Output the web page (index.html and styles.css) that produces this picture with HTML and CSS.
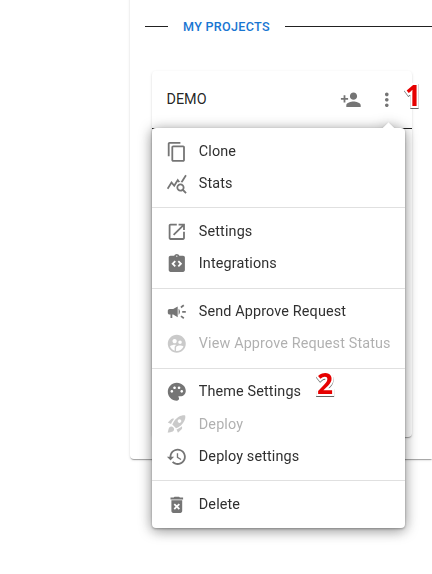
FILE: index.html
```html
<!DOCTYPE html>
<html lang="en">
<head>
<meta charset="utf-8">
<title>My projects</title>
<link rel="stylesheet" href="styles.css">
</head>
<body>
<main class="panel">
  <h2 class="heading"><span>MY PROJECTS</span></h2>
  <div class="cards">
    <section class="card">
      <header class="card-head">
        <span class="card-title">DEMO</span>
        <svg class="icon" viewBox="0 0 24 24"><path d="M15 12c2.21 0 4-1.79 4-4s-1.79-4-4-4-4 1.79-4 4 1.79 4 4 4zm-9-2V7H4v3H1v2h3v3h2v-3h3v-2H6zm9 4c-2.67 0-8 1.34-8 4v2h16v-2c0-2.66-5.33-4-8-4z"/></svg>
        <svg class="icon more" viewBox="0 0 24 24"><path d="M12 8c1.1 0 2-.9 2-2s-.9-2-2-2-2 .9-2 2 .9 2 2 2zm0 2c-1.1 0-2 .9-2 2s.9 2 2 2 2-.9 2-2-.9-2-2-2zm0 6c-1.1 0-2 .9-2 2s.9 2 2 2 2-.9 2-2-.9-2-2-2z"/></svg>
      </header>
    </section>
  </div>
</main>
<nav class="menu">
  <div class="item"><svg class="icon" viewBox="0 0 24 24"><path d="M16 1H4c-1.1 0-2 .9-2 2v14h2V3h12V1zm3 4H8c-1.1 0-2 .9-2 2v14c0 1.1.9 2 2 2h11c1.1 0 2-.9 2-2V7c0-1.1-.9-2-2-2zm0 16H8V7h11v14z"/></svg><span>Clone</span></div>
  <div class="item"><svg class="icon" viewBox="0 0 24 24"><path d="M19.88 18.47c.44-.7.7-1.51.7-2.39 0-2.49-2.01-4.5-4.5-4.5s-4.5 2.01-4.5 4.5 2.01 4.5 4.49 4.5c.88 0 1.7-.26 2.39-.7L21.58 23 23 21.58l-3.12-3.11zm-3.8.11c-1.38 0-2.5-1.12-2.5-2.5s1.12-2.5 2.5-2.5 2.5 1.12 2.5 2.5-1.12 2.5-2.5 2.5zm-.36-8.5c-.74.02-1.45.18-2.1.45l-.55-.83-3.8 6.18-3.01-3.52-3.63 5.81L1 17l5-8 3 3.5L13 6l2.72 4.08zm2.59.5c-.64-.28-1.33-.45-2.05-.49L21.38 2 23 3.18l-4.69 7.4z"/></svg><span>Stats</span></div>
  <hr>
  <div class="item"><svg class="icon" viewBox="0 0 24 24"><path d="M19 19H5V5h7V3H5c-1.11 0-2 .9-2 2v14c0 1.1.89 2 2 2h14c1.1 0 2-.9 2-2v-7h-2v7zM14 3v2h3.59l-9.83 9.83 1.41 1.41L19 6.41V10h2V3h-7z"/></svg><span>Settings</span></div>
  <div class="item"><svg class="icon" viewBox="0 0 24 24"><path d="M19 3h-4.18C14.4 1.84 13.3 1 12 1s-2.4.84-2.82 2H5c-1.1 0-2 .9-2 2v14c0 1.1.9 2 2 2h14c1.1 0 2-.9 2-2V5c0-1.1-.9-2-2-2zm-8 11.17L9.59 15.58 6 12l3.59-3.59L11 9.83 8.83 12 11 14.17zM12 4.25c-.41 0-.75-.34-.75-.75s.34-.75.75-.75.75.34.75.75-.34.75-.75.75zm2.41 11.33L13 14.17 15.17 12 13 9.83l1.41-1.42L18 12l-3.59 3.58z"/></svg><span>Integrations</span></div>
  <hr>
  <div class="item"><svg class="icon" viewBox="0 0 24 24"><path d="M18 11v2h4v-2h-4zm-2 6.61c.96.71 2.21 1.65 3.2 2.39.4-.53.8-1.07 1.2-1.6-.99-.74-2.24-1.68-3.2-2.4-.4.54-.8 1.08-1.2 1.61zM20.4 5.6c-.4-.53-.8-1.07-1.2-1.6-.99.74-2.24 1.68-3.2 2.4.4.53.8 1.07 1.2 1.6.96-.72 2.21-1.65 3.2-2.4zM4 9c-1.1 0-2 .9-2 2v2c0 1.1.9 2 2 2h1v4h2v-4h1l5 3V6L8 9H4zm11.5 3c0-1.33-.58-2.53-1.5-3.35v6.69c.92-.81 1.5-2.01 1.5-3.34z"/></svg><span>Send Approve Request</span></div>
  <div class="item disabled"><svg class="icon" viewBox="0 0 24 24"><path d="M11.99 2c-5.52 0-10 4.48-10 10s4.48 10 10 10 10-4.48 10-10-4.48-10-10-10zm3.61 6.34c1.07 0 1.93.86 1.93 1.93s-.86 1.93-1.93 1.93-1.93-.86-1.93-1.93c-.01-1.07.86-1.93 1.93-1.93zm-6-1.58c1.3 0 2.36 1.06 2.36 2.36s-1.06 2.36-2.36 2.36-2.36-1.06-2.36-2.36c0-1.31 1.05-2.36 2.36-2.36zm0 9.13v3.75c-2.4-.75-4.3-2.6-5.14-4.96 1.05-1.12 3.67-1.69 5.14-1.69.53 0 1.2.08 1.9.22-1.64.87-1.9 2.02-1.9 2.68zM11.99 20c-.27 0-.53-.01-.79-.04v-4.07c0-1.42 2.94-2.13 4.4-2.13 1.07 0 2.92.39 3.84 1.15-1.17 2.97-4.06 5.09-7.45 5.09z"/></svg><span>View Approve Request Status</span></div>
  <hr>
  <div class="item"><svg class="icon" viewBox="0 0 24 24"><path d="M12 2C6.49 2 2 6.49 2 12s4.49 10 10 10c1.38 0 2.5-1.12 2.5-2.5 0-.61-.23-1.2-.64-1.67-.08-.1-.13-.21-.13-.33 0-.28.22-.5.5-.5H16c3.31 0 6-2.69 6-6 0-4.96-4.49-9-10-9zm5.5 11c-.83 0-1.5-.67-1.5-1.5s.67-1.5 1.5-1.5 1.5.67 1.5 1.5-.67 1.5-1.5 1.5zm-3-4c-.83 0-1.5-.67-1.5-1.5S13.67 6 14.5 6s1.5.67 1.5 1.5S15.33 9 14.5 9zM5 11.5c0-.83.67-1.5 1.5-1.5s1.5.67 1.5 1.5S7.33 13 6.5 13 5 12.33 5 11.5zm6-4c0 .83-.67 1.5-1.5 1.5S8 8.33 8 7.5 8.67 6 9.5 6s1.5.67 1.5 1.5z"/></svg><span>Theme Settings</span></div>
  <div class="item disabled"><svg class="icon" viewBox="0 0 24 24"><path d="M9.19 6.35c-2.04 2.29-3.44 5.58-3.57 5.89L2 10.69l4.05-4.05c.47-.47 1.15-.68 1.81-.55l1.33.26zM11.17 17s3.74-1.55 5.89-3.7c5.4-5.4 4.5-9.62 4.21-10.57-.95-.3-5.17-1.19-10.57 4.21C8.55 9.09 7 12.83 7 12.83L11.17 17zm6.48-2.19c-2.29 2.04-5.58 3.44-5.89 3.57L13.31 22l4.05-4.05c.47-.47.68-1.15.55-1.81l-.26-1.33zM9 18c0 .83-.34 1.58-.88 2.12C6.94 21.3 2 22 2 22s.7-4.94 1.88-6.12A2.996 2.996 0 0 1 9 18zm4-9c0-1.1.9-2 2-2s2 .9 2 2-.9 2-2 2-2-.9-2-2z"/></svg><span>Deploy</span></div>
  <div class="item"><svg class="icon" viewBox="0 0 24 24"><path d="M13 3c-4.97 0-9 4.03-9 9H1l3.89 3.89.07.14L9 12H6c0-3.87 3.13-7 7-7s7 3.13 7 7-3.13 7-7 7c-1.93 0-3.68-.79-4.94-2.06l-1.42 1.42C8.27 19.99 10.51 21 13 21c4.97 0 9-4.03 9-9s-4.03-9-9-9zm-1 5v5l4.28 2.54.72-1.21-3.5-2.08V8H12z"/></svg><span>Deploy settings</span></div>
  <hr>
  <div class="item"><svg class="icon" viewBox="0 0 24 24"><path fill-rule="evenodd" d="M6 19c0 1.1.9 2 2 2h8c1.1 0 2-.9 2-2V7H6v12zM8.46 11.88l1.41-1.41L12 12.59l2.12-2.12 1.41 1.41L13.41 14l2.12 2.12-1.41 1.41L12 15.41l-2.12 2.12-1.41-1.41L10.59 14l-2.13-2.12zM15.5 4l-1-1h-5l-1 1H5v2h14V4z"/></svg><span>Delete</span></div>
</nav>
<span class="mark one">1</span>
<span class="mark two">2</span>
</body>
</html>
```
FILE: styles.css
```css
* { box-sizing: border-box; }
body {
  margin: 0;
  width: 432px;
  height: 574px;
  overflow: hidden;
  position: relative;
  background: #fff;
  color: rgba(0, 0, 0, .87);
  font-family: Roboto, sans-serif;
}
.panel {
  width: 302px;
  height: 469px;
  margin: -10px 0 0 130px;
  padding: 28px 0 0 15px;
  border-radius: 4px 0 0 4px;
  box-shadow: 0 2px 1px -1px rgba(0,0,0,.2), 0 1px 1px rgba(0,0,0,.14), 0 1px 3px rgba(0,0,0,.12);
}
.heading {
  display: flex;
  align-items: center;
  gap: 15px;
  height: 17px;
  margin: 0;
  color: #1976d2;
  font-size: 12.6px;
  line-height: 15px;
  font-weight: 500;
  letter-spacing: .29px;
}
.heading::before, .heading::after {
  content: "";
  height: 1px;
  background: #212121;
}
.heading span { margin-top: -1px; }
.heading::before { width: 23px; }
.heading::after { flex: 1; }
.cards {
  display: flex;
  margin: 36px 0 0 7px;
}
.card {
  flex: none;
  width: 260px;
  height: 366px;
  border-radius: 4px;
  box-shadow: 0 2px 1px -1px rgba(0,0,0,.2), 0 1px 1px rgba(0,0,0,.14), 0 1px 3px rgba(0,0,0,.12);
}
.card-head {
  display: flex;
  align-items: center;
  height: 58px;
  padding: 0 14.2px 0 14.4px;
  border-bottom: 1px solid #212121;
}
.card-title {
  flex: 1;
  font-size: 14.4px;
  letter-spacing: .05px;
}
.icon {
  flex: none;
  width: 21.6px;
  height: 21.6px;
  fill: #757575;
}
.more { margin-left: 14.4px; }
.menu {
  position: absolute;
  left: 152px;
  top: 128px;
  width: 253px;
  height: 400px;
  padding-top: 7.4px;
  border-radius: 4px;
  background: #fff;
  color: #303030;
  filter: drop-shadow(0 2px 7px rgba(0,0,0,.36)) drop-shadow(0 1px 1px rgba(0,0,0,.35));
}
.menu::before {
  content: "";
  position: absolute;
  top: -4.5px;
  right: 12px;
  width: 9px;
  height: 9px;
  background: #fff;
  transform: rotate(45deg);
}
.item {
  display: flex;
  align-items: center;
  gap: 10.8px;
  height: 32.2px;
  padding: 0 14.4px;
  font-size: 14.4px;
  letter-spacing: .135px;
  white-space: nowrap;
}
.disabled { opacity: .38; }
.menu hr {
  height: 1px;
  margin: 7.6px 0 7.2px;
  border: 0;
  background: #e0e0e0;
}
.mark {
  position: absolute;
  color: #e60000;
  font: 700 28px/32px "Open Sans", sans-serif;
  -webkit-text-stroke: 4px #fff;
  paint-order: stroke fill;
  filter: drop-shadow(.5px 1px .3px rgba(0,0,0,.6));
}
.one { left: 405px; top: 79px; }
.two { left: 317px; top: 367px; }
```
